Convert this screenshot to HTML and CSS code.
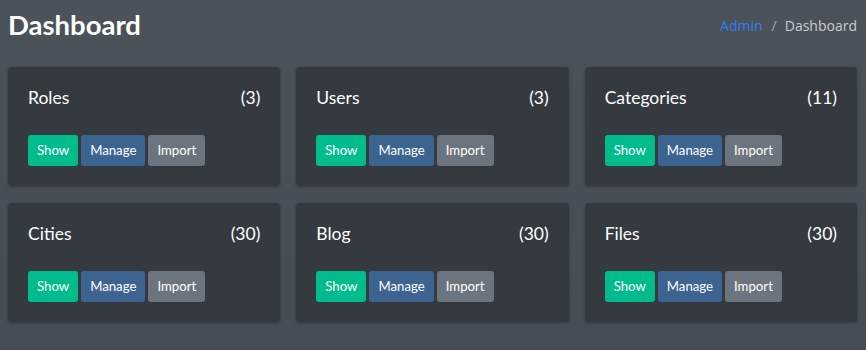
FILE: index.html
```html
<!DOCTYPE html>
<html lang="en">
<head>
  <meta charset="UTF-8">
  <meta name="viewport" content="width=device-width, initial-scale=1.0">
  <title>Dashboard</title>
  <link rel="stylesheet" href="styles.css">
</head>
<body>
  <div class="content-header">
    <h1>Dashboard</h1>
    <ol class="breadcrumb">
      <li><a href="#">Admin</a></li>
      <li class="active">Dashboard</li>
    </ol>
  </div>

  <div class="cards">
    <div class="card">
      <div class="card-title"><span>Roles</span><span>(3)</span></div>
      <div class="actions">
        <a class="btn btn-show" href="#">Show</a>
        <a class="btn btn-manage" href="#">Manage</a>
        <a class="btn btn-import" href="#">Import</a>
      </div>
    </div>
    <div class="card">
      <div class="card-title"><span>Users</span><span>(3)</span></div>
      <div class="actions">
        <a class="btn btn-show" href="#">Show</a>
        <a class="btn btn-manage" href="#">Manage</a>
        <a class="btn btn-import" href="#">Import</a>
      </div>
    </div>
    <div class="card">
      <div class="card-title"><span>Categories</span><span>(11)</span></div>
      <div class="actions">
        <a class="btn btn-show" href="#">Show</a>
        <a class="btn btn-manage" href="#">Manage</a>
        <a class="btn btn-import" href="#">Import</a>
      </div>
    </div>
    <div class="card">
      <div class="card-title"><span>Cities</span><span>(30)</span></div>
      <div class="actions">
        <a class="btn btn-show" href="#">Show</a>
        <a class="btn btn-manage" href="#">Manage</a>
        <a class="btn btn-import" href="#">Import</a>
      </div>
    </div>
    <div class="card">
      <div class="card-title"><span>Blog</span><span>(30)</span></div>
      <div class="actions">
        <a class="btn btn-show" href="#">Show</a>
        <a class="btn btn-manage" href="#">Manage</a>
        <a class="btn btn-import" href="#">Import</a>
      </div>
    </div>
    <div class="card">
      <div class="card-title"><span>Files</span><span>(30)</span></div>
      <div class="actions">
        <a class="btn btn-show" href="#">Show</a>
        <a class="btn btn-manage" href="#">Manage</a>
        <a class="btn btn-import" href="#">Import</a>
      </div>
    </div>
  </div>
</body>
</html>
```

FILE: styles.css
```css
body {
  font-family: Lato, 'Open Sans', sans-serif;
  background: linear-gradient(#4b525a, #454c54);
  color: #ffffff;
  margin: 0;
  height: 350px;
  overflow: hidden;
}
.content-header {
  display: flex;
  justify-content: space-between;
  align-items: center;
  padding: 8px 9px 0 8px;
}
h1 {
  font-size: 27.5px;
  font-weight: 700;
  line-height: 34px;
  margin: 0;
}
.breadcrumb {
  display: flex;
  list-style: none;
  margin: 0;
  padding: 0;
  font-family: 'Open Sans', sans-serif;
  font-size: 14px;
}
.breadcrumb li + li::before {
  content: "/";
  color: #a4aab0;
  padding: 0 8px 0 9px;
}
.breadcrumb a {
  color: #2f7ef0;
  text-decoration: none;
}
.breadcrumb .active {
  color: #c8ccd0;
}
.cards {
  display: grid;
  grid-template-columns: repeat(3, 1fr);
  gap: 17px 16px;
  padding: 0 9px 0 8px;
  margin-top: 25px;
}
.card {
  background-color: #343a40;
  border-radius: 4px;
  padding: 20px;
  height: 119px;
  box-sizing: border-box;
  box-shadow: 0 0 1px rgba(0, 0, 0, 0.2), 0 1px 3px rgba(0, 0, 0, 0.25);
}
.card-title {
  display: flex;
  justify-content: space-between;
  font-size: 17.5px;
  line-height: 22px;
  margin-bottom: 26px;
}
.actions {
  display: flex;
  gap: 3px;
}
.btn {
  display: inline-block;
  font-size: 13.2px;
  line-height: 21px;
  padding: 4px 8px;
  border: 1px solid transparent;
  border-radius: 3px;
  color: #ffffff;
  text-decoration: none;
}
.btn-show {
  background-color: #00bc8c;
}
.btn-manage {
  background-color: #3d6391;
}
.btn-import {
  background-color: #6c757d;
}
```
